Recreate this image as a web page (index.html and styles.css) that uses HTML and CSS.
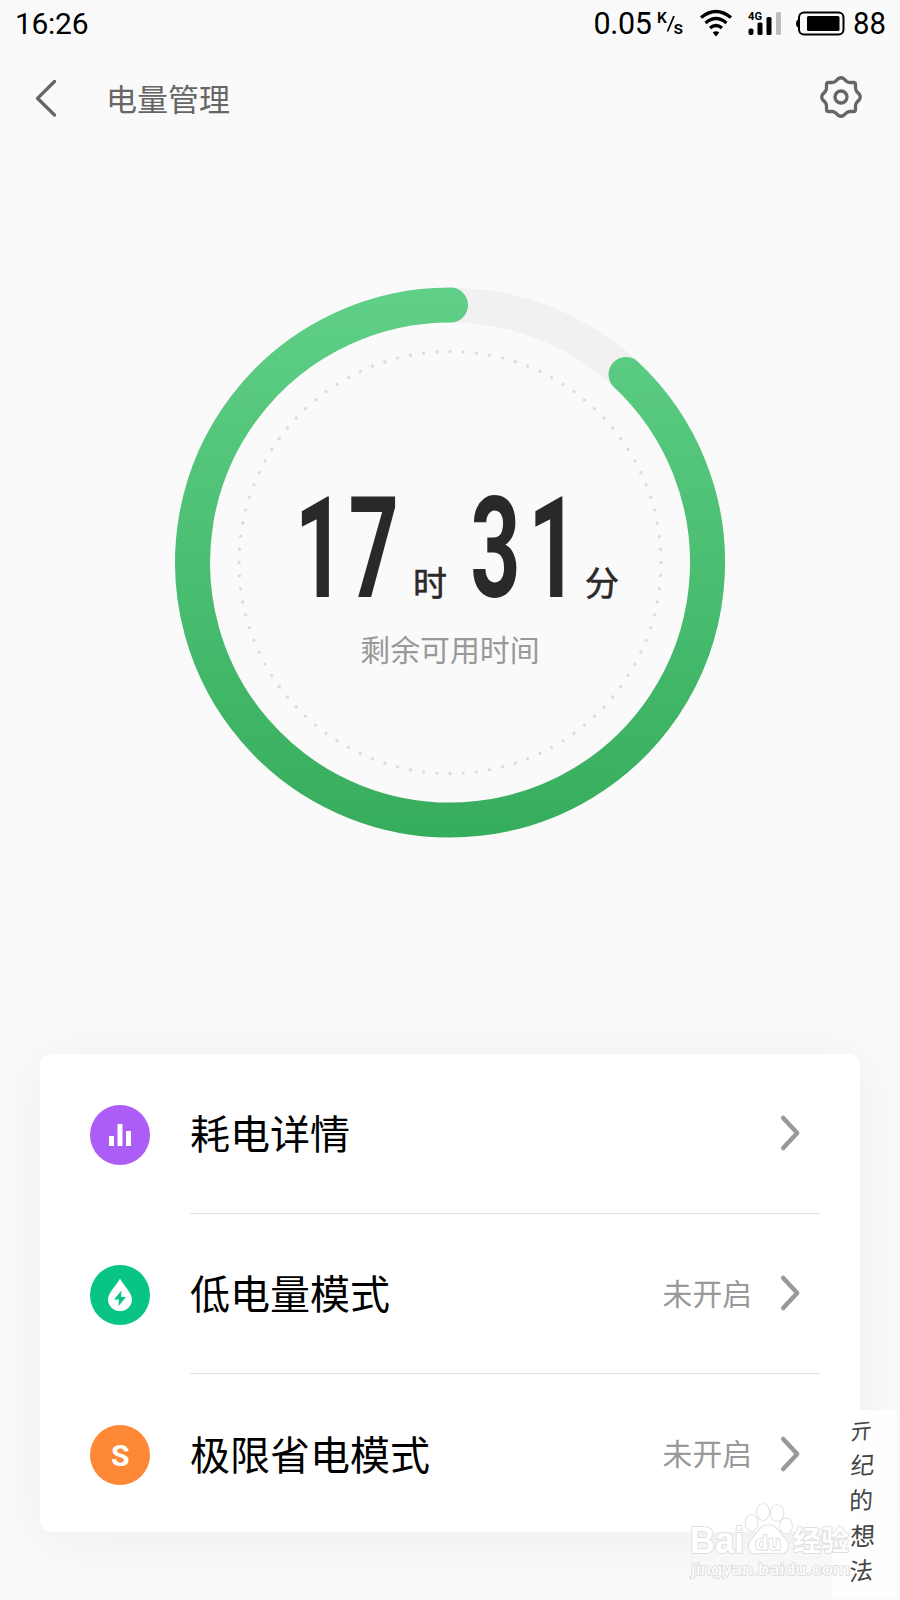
FILE: index.html
```html
<!DOCTYPE html>
<html lang="zh-CN">
<head>
<meta charset="utf-8">
<title>电量管理</title>
<link rel="stylesheet" href="styles.css">
</head>
<body>
<main class="screen">
  <div class="status">
    <span class="clock">16:26</span>
    <svg class="indicators" width="320" height="46" viewBox="580 0 320 46">
      <text x="593.5" y="34" font-size="30.5" textLength="58.5">0.05</text>
      <text x="657" y="23" font-size="15.5" font-weight="600">K</text>
      <path d="M667.500 31.500l6.500-15.500" stroke="#000" stroke-width="1.800"/>
      <text x="673.500" y="34" font-size="19" font-weight="500">s</text>
      <g fill="none" stroke="#000" stroke-width="3.200">
        <path d="M701 17.500Q716 5.500 731 17.500"/>
        <path d="M705.500 23Q716 14 726.500 23"/>
        <path d="M710 28Q716 23 722 28"/>
      </g>
      <path d="M712.700 32.500Q716 29.800 719.300 32.500L716 36.500Z"/>
      <text x="748" y="20" font-size="10" font-weight="700" textLength="14" lengthAdjust="spacingAndGlyphs">4G</text>
      <rect x="748.500" y="28.500" width="5" height="6.500" rx="2"/>
      <rect x="757.500" y="22.500" width="5" height="12.500" rx="1.500"/>
      <rect x="766.500" y="17" width="5" height="18" rx="1.500"/>
      <rect x="776" y="12" width="5" height="23" rx="1.500" fill="#bdbdbd"/>
      <rect x="799" y="12.500" width="44.500" height="22" rx="5" fill="none" stroke="#000" stroke-width="2"/>
      <path d="M799 19q-3 1-3 4.500t3 4.500z"/>
      <rect x="807" y="16" width="32.500" height="15" rx="1.500"/>
      <text x="853" y="34" font-size="30.5" textLength="33" lengthAdjust="spacingAndGlyphs">88</text>
    </svg>
  </div>

  <header class="topbar">
    <svg class="back" width="24" height="40" viewBox="0 0 24 40"><path d="M21.500 3.500L4.500 20.300L21.500 37"/></svg>
    <h1>电量管理</h1>
    <svg class="gear" width="44" height="44" viewBox="-22 -21 44 44">
      <path d="M-2.500 -18.500Q0 -20 2.500 -18.500L5.500 -15.700Q7 -14.500 9 -14.500H12.500Q14.500 -14.500 14.500 -12.500V-9Q14.500 -7 15.700 -5.500L18.500 -2.500Q20 0 18.500 2.500L15.700 5.500Q14.500 7 14.500 9V12.500Q14.500 14.500 12.500 14.500H9Q7 14.500 5.500 15.700L2.500 18.500Q0 20 -2.500 18.500L-5.500 15.700Q-7 14.500 -9 14.500H-12.500Q-14.500 14.500 -14.500 12.500V9Q-14.500 7 -15.700 5.500L-18.500 2.500Q-20 0 -18.500 -2.500L-15.700 -5.500Q-14.500 -7 -14.500 -9V-12.500Q-14.500 -14.500 -12.500 -14.500H-9Q-7 -14.500 -5.500 -15.700Z"/>
      <circle r="6"/>
    </svg>
  </header>

  <section class="gauge">
    <svg width="560" height="560" viewBox="170 282.500 560 560">
      <defs>
        <linearGradient id="ring" gradientUnits="userSpaceOnUse" x1="0" y1="288" x2="0" y2="837">
          <stop offset="0" stop-color="#60d088"/>
          <stop offset="1" stop-color="#36ad5c"/>
        </linearGradient>
      </defs>
      <circle cx="450" cy="562" r="257.500" fill="none" stroke="#f1f1f1" stroke-width="35"/>
      <path d="M626 374A257.500 257.500 0 1 1 450.500 304.500" fill="none" stroke="url(#ring)" stroke-width="35" stroke-linecap="round"/>
      <circle class="dots" cx="450" cy="562" r="211" pathLength="1000" transform="rotate(-90 450 562)"/>
      <g class="digits">
        <text transform="translate(0 596.500) scale(.62 1)" x="475.500 562.500">17</text>
        <text transform="translate(0 596.500) scale(.62 1)" x="759 852">31</text>
      </g>
      <text class="unit" x="413" y="595.500">时</text>
      <text class="unit" x="585" y="595.500">分</text>
      <text class="caption" x="360.300" y="660">剩余可用时间</text>
    </svg>
  </section>

  <section class="card">
    <div class="row">
      <svg class="badge" width="60" height="60" viewBox="0 0 60 60">
        <circle cx="30" cy="30" r="30" fill="#ab5df5"/>
        <path fill="#fff" d="M19 31h5v10h-5zM27.500 19h5v22h-5zM36 26h5v15h-5z"/>
      </svg>
      <div class="body">
        <span class="name">耗电详情</span>
        <svg class="chevron" width="22" height="38" viewBox="0 0 22 38"><path d="M4.200 4L18.200 19L4.200 34"/></svg>
      </div>
    </div>
    <div class="row">
      <svg class="badge" width="60" height="60" viewBox="0 0 60 60">
        <circle cx="30" cy="30" r="30" fill="#08c583"/>
        <path fill="#fff" d="M30 13.500C33 20 42 27.500 42 34.500A12 11.500 0 0 1 18 34.500C18 27.500 27 20 30 13.500Z"/>
        <path fill="#08c583" d="M31.500 25.500L24 34.500H29L28.500 41L36 32H31Z"/>
      </svg>
      <div class="body">
        <span class="name">低电量模式</span>
        <span class="state">未开启</span>
        <svg class="chevron" width="22" height="38" viewBox="0 0 22 38"><path d="M4.200 4L18.200 19L4.200 34"/></svg>
      </div>
    </div>
    <div class="row">
      <svg class="badge" width="60" height="60" viewBox="0 0 60 60">
        <circle cx="30" cy="30" r="30" fill="#fe8836"/>
        <text class="letter" x="30.300" y="41" text-anchor="middle">S</text>
      </svg>
      <div class="body">
        <span class="name">极限省电模式</span>
        <span class="state">未开启</span>
        <svg class="chevron" width="22" height="38" viewBox="0 0 22 38"><path d="M4.200 4L18.200 19L4.200 34"/></svg>
      </div>
    </div>
  </section>

  <svg class="stamp" width="220" height="190" viewBox="680 1410 220 190">
    <path fill="#fefefe" d="M858 1410H897V1597H832V1532H858Z"/>
    <g class="mark">
      <text x="690" y="1553" font-size="36" font-weight="700" textLength="54" lengthAdjust="spacingAndGlyphs">Bai</text>
      <path d="M768.500 1525C776 1525 779 1532 785 1539C792 1547 786 1554.500 778 1553.500Q768 1552 758 1553.500C750 1554.500 745 1547 752 1539C758 1532 761 1525 768.500 1525Z"/>
      <ellipse cx="751.500" cy="1523" rx="6" ry="8"/>
      <ellipse cx="763" cy="1512" rx="6" ry="8"/>
      <ellipse cx="777" cy="1513" rx="6.500" ry="8"/>
      <ellipse cx="786" cy="1526" rx="6" ry="7.500"/>
      <text x="755" y="1550" font-size="21" font-weight="700" textLength="26" lengthAdjust="spacingAndGlyphs">du</text>
      <text x="793" y="1551" font-size="28" font-weight="700" textLength="56">经验</text>
      <text class="url" x="691" y="1575" font-size="17" textLength="159" lengthAdjust="spacingAndGlyphs">jingyan.baidu.com</text>
    </g>
    <g class="signature">
      <text transform="translate(850 1440) rotate(-5) skewX(-8)" font-size="22">亓</text>
      <text transform="translate(850 1475) rotate(-4) skewX(-8)">纪</text>
      <text transform="translate(849 1510) rotate(-4) skewX(-5)">的</text>
      <text transform="translate(850 1546) rotate(-3) skewX(-5)" font-size="25">想</text>
      <text transform="translate(849 1581) rotate(-6) skewX(-8)">法</text>
    </g>
  </svg>
</main>
</body>
</html>
```
FILE: styles.css
```css
* { box-sizing: border-box; }

body {
  margin: 0;
  font-family: Roboto, "Noto Sans CJK SC", sans-serif;
  background: #fafafa;
}

.screen {
  position: relative;
  width: 900px;
  height: 1600px;
  overflow: hidden;
  background: #fafafa;
}

.status {
  display: flex;
  justify-content: space-between;
  align-items: center;
  height: 46px;
  padding-left: 15px;
  color: #000;
}

.clock { padding-top: 2px; font-size: 30px; line-height: 46px; letter-spacing: -0.3px; }

.topbar {
  display: flex;
  align-items: center;
  height: 104px;
  padding: 0 37px 0 33px;
}

.topbar h1 {
  flex: 1;
  margin: 0 0 0 49px;
  padding-bottom: 1px;
  font: 400 31px/46px "Noto Sans CJK SC", sans-serif;
  color: #666;
}

.back path, .gear path, .gear circle {
  fill: none;
  stroke: #666;
  stroke-width: 3.3;
  stroke-linecap: round;
  stroke-linejoin: round;
}

.gauge {
  display: flex;
  justify-content: center;
  padding-top: 132.5px;
  height: 904px;
}

.gauge svg { flex: none; }

.dots {
  fill: none;
  stroke: #dcdcdc;
  stroke-width: 3.4;
  stroke-linecap: round;
  stroke-dasharray: 0 10;
}

.digits { font: 700 140.600px Roboto, sans-serif; fill: #292929; }
.unit { font: 400 34px "Noto Sans CJK SC", sans-serif; fill: #292929; stroke: #292929; stroke-width: 0.6; }
.caption { font: 400 29.900px "Noto Sans CJK SC", sans-serif; fill: #999; }

.card {
  margin: 0 40px;
  height: 478px;
  padding: 0 40px 0 50px;
  border-radius: 12px;
  background: #fff;
  box-shadow: 0 6px 60px rgba(0, 0, 0, 0.055);
}

.row {
  display: flex;
  align-items: center;
  gap: 40px;
  height: 160px;
}

.badge { flex: none; margin-top: 2px; }

.body {
  flex: 1;
  display: flex;
  align-items: center;
  height: 160px;
  padding-right: 19px;
  border-bottom: 1px solid #dfdfdf;
}

.row:last-child .body { border-bottom: 0; }

.name {
  flex: 1;
  padding-bottom: 3px;
  font: 400 40px/60px "Noto Sans CJK SC", sans-serif;
  color: #000;
}

.state {
  margin-right: 27px;
  padding-bottom: 4px;
  font: 400 29.800px/44px "Noto Sans CJK SC", sans-serif;
  color: #999;
}

.chevron { margin-bottom: 1px; }

.chevron path {
  fill: none;
  stroke: #999;
  stroke-width: 4.5;
  stroke-linecap: round;
  stroke-linejoin: round;
}

.letter { font: 700 30px Roboto, sans-serif; fill: #fff; }

.stamp { position: absolute; right: 0; bottom: 0; }

.mark {
  font-family: "Liberation Sans", "Noto Sans CJK SC", sans-serif;
  fill: #fff;
  stroke: #dadada;
  stroke-width: 1.6;
  paint-order: stroke;
}

.url { font-family: Roboto, sans-serif; }

.signature { font: 400 24px "Noto Sans CJK SC", sans-serif; fill: #444; }
```
